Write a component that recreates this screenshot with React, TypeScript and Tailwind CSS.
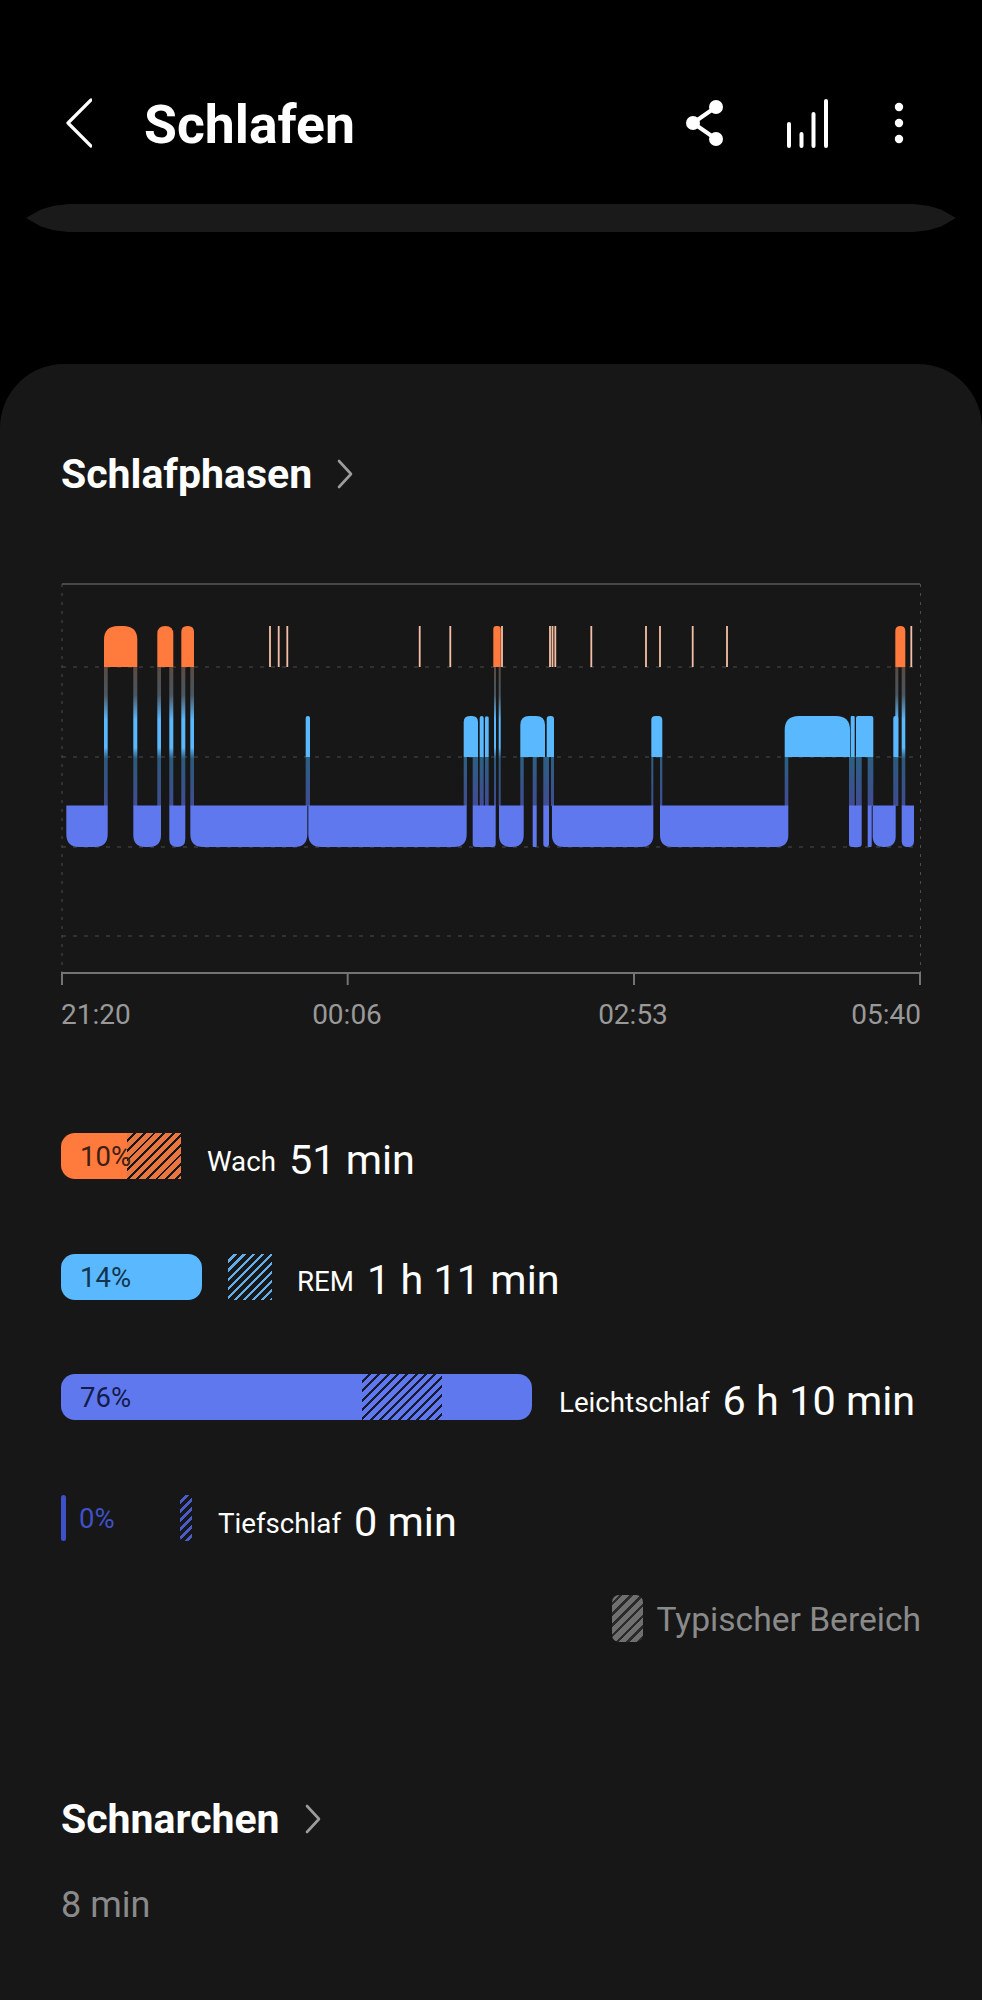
const ORANGE = '#ff7a3c'
const BLUE = '#5ab8ff'
const LIGHT = '#6078ee'

// [von x, bis x, Radius]
const wachBlocks = [
  [104, 137.3, 14],
  [157.3, 173.3, 8],
  [181.3, 194, 6],
  [493.3, 500.7, 3],
  [895.3, 905.3, 5],
]
const wachTicks = [270, 278.7, 287.3, 419.7, 450.3, 502, 550, 552.5, 555.3, 591.3, 646, 660, 692.7, 727, 911.3]
const remBlocks = [
  [305.7, 310, 2],
  [463.7, 478, 6],
  [479.7, 483.7, 2],
  [485, 488.7, 2],
  [520.3, 545, 9],
  [546.7, 554, 3],
  [651.3, 662.3, 4],
  [784.7, 850, 14],
  [850.7, 854.7, 1],
  [856, 873.3, 2],
  [893.3, 898.3, 2],
]
const leichtBlocks = [
  [66.3, 107.7, 13],
  [133.3, 161, 12],
  [169.3, 185.3, 8],
  [190.3, 307.3, 13],
  [308.3, 466.7, 13],
  [472.7, 495.7, 3],
  [499, 523.7, 12],
  [532.7, 536.7, 1],
  [543.3, 549, 3],
  [552, 653.3, 12],
  [660, 788.3, 12],
  [849, 861.7, 3],
  [867.7, 871.7, 1],
  [872.7, 895.7, 11],
  [901.7, 914, 6],
]
const wachStrips = [
  [104, 107.7],
  [133.3, 137.3],
  [157.3, 161],
  [169.3, 173.3],
  [181.3, 185.3],
  [190.3, 194],
  [494, 496],
  [498.7, 500.7],
  [895.3, 898.3],
  [901.7, 905.3],
]
const remStrips = [
  [305.7, 310],
  [463.7, 467],
  [472.7, 478],
  [479.7, 483.7],
  [485, 488.7],
  [520.3, 523.7],
  [532.7, 536.7],
  [543.3, 549],
  [551, 554],
  [651.3, 653.3],
  [660, 662.3],
  [784.7, 788.3],
  [849, 854.7],
  [856, 861.7],
  [867.7, 873.3],
  [893.3, 895.7],
]

function topRounded(x1: number, x2: number, r: number, top: number, bottom: number) {
  return `M${x1} ${bottom}V${top + r}Q${x1} ${top} ${x1 + r} ${top}H${x2 - r}Q${x2} ${top} ${x2} ${top + r}V${bottom}Z`
}

function bottomRounded(x1: number, x2: number, r: number, top: number, bottom: number) {
  return `M${x1} ${top}V${bottom - r}Q${x1} ${bottom} ${x1 + r} ${bottom}H${x2 - r}Q${x2} ${bottom} ${x2} ${bottom - r}V${top}Z`
}

function SleepChart() {
  return (
    <svg className="block w-[860px] h-[410px]" viewBox="61 580 860 410">
      <defs>
        <linearGradient id="wachStrip" gradientUnits="userSpaceOnUse" x1="0" y1="667" x2="0" y2="806">
          <stop offset="0" stopColor="#5a4a44" />
          <stop offset="0.2" stopColor="#4a5660" />
          <stop offset="0.38" stopColor="#5ab8ff" />
          <stop offset="0.58" stopColor="#5ab8ff" />
          <stop offset="0.66" stopColor="#2c5a7a" />
          <stop offset="1" stopColor="#404c94" />
        </linearGradient>
        <linearGradient id="remStrip" gradientUnits="userSpaceOnUse" x1="0" y1="757" x2="0" y2="806">
          <stop offset="0" stopColor="#2c5f82" />
          <stop offset="1" stopColor="#404c94" />
        </linearGradient>
      </defs>

      {/* Raster */}
      <path d="M62 584H920" stroke="#484848" strokeWidth="2" />
      <path d="M62 584V973M920.5 584V973" stroke="#4c4c4c" strokeWidth="1" strokeDasharray="3 6" />
      <path d="M62 667H920M62 757H920M62 847H920M62 936H920" stroke="#4c4c4c" strokeWidth="1" strokeDasharray="4 7" />
      <path d="M61 973H921" stroke="#747474" strokeWidth="2" />
      <path d="M62 973V985M347.7 973V985M634 973V985M920 973V985" stroke="#747474" strokeWidth="2" />

      {/* Übergänge */}
      {wachStrips.map(([a, b]) => (
        <rect key={a} x={a} y={667} width={b - a} height={139} fill="url(#wachStrip)" />
      ))}
      {remStrips.map(([a, b]) => (
        <rect key={a} x={a} y={757} width={b - a} height={49} fill="url(#remStrip)" />
      ))}

      {/* Phasen */}
      {wachTicks.map(x => (
        <rect key={x} x={x - 0.9} y={626} width={1.8} height={41} fill="#f4bfa4" />
      ))}
      {wachBlocks.map(([a, b, r]) => (
        <path key={a} d={topRounded(a, b, r, 626, 667)} fill={ORANGE} />
      ))}
      {remBlocks.map(([a, b, r]) => (
        <path key={a} d={topRounded(a, b, r, 716, 757)} fill={BLUE} />
      ))}
      {leichtBlocks.map(([a, b, r]) => (
        <path key={a} d={bottomRounded(a, b, r, 805.5, 847)} fill={LIGHT} />
      ))}
    </svg>
  )
}

function Chevron({ className }: { className: string }) {
  return (
    <svg className={className} viewBox="0 0 16 30" fill="none" stroke="#9c9c9c" strokeWidth="2.6" strokeLinecap="round" strokeLinejoin="round">
      <path d="M2 2L14 15L2 28" />
    </svg>
  )
}

function Stage({ label, value }: { label: string; value: string }) {
  return (
    <div className="flex items-end mt-[7px] whitespace-nowrap text-white">
      <span className="text-[27.7px] leading-[43px]">{label}</span>
      <span className="ml-[13px] text-[41.4px] leading-[46px]">{value}</span>
    </div>
  )
}

export default function App() {
  return (
    <div className="flex flex-col w-[982px] h-[2000px] overflow-hidden bg-black font-[Roboto,sans-serif]">
      {/* Kopfzeile */}
      <header className="flex items-center h-[50px] mt-[98px] pl-[66px] text-white">
        <svg className="w-[26px] h-[50px]" viewBox="0 0 26 50" fill="none" stroke="#fff" strokeWidth="3.2" strokeLinecap="round" strokeLinejoin="round">
          <path d="M25 2L2 25L25 48" />
        </svg>
        <h1 className="ml-[52px] mt-[3px] text-[53.5px] leading-[50px] font-bold">Schlafen</h1>
        <svg className="ml-auto w-[44px] h-[50px]" viewBox="0 0 44 50" fill="#fff" stroke="#fff" strokeWidth="4">
          <path d="M33 9L10 25L33 41" fill="none" />
          <circle cx="33" cy="9" r="7" stroke="none" />
          <circle cx="10" cy="25" r="7" stroke="none" />
          <circle cx="33" cy="41" r="7" stroke="none" />
        </svg>
        <svg className="ml-[58px] w-[44px] h-[50px]" viewBox="0 0 44 50" fill="none" stroke="#fff" strokeWidth="4" strokeLinecap="round">
          <path d="M4 48V26M16.5 48V36M28.5 48V16M41 48V3" />
        </svg>
        <svg className="ml-[64px] mr-[77px] w-[12px] h-[50px]" viewBox="0 0 12 50" fill="#fff">
          <circle cx="6" cy="9" r="4.2" />
          <circle cx="6" cy="25" r="4.2" />
          <circle cx="6" cy="41" r="4.2" />
        </svg>
      </header>

      <div className="mt-[56px] mx-[26px] h-[28px] bg-[#1a1a1a] [clip-path:polygon(0_50%,1.6%_20%,3%_6%,4.6%_0,95.4%_0,97%_6%,98.4%_20%,100%_50%,98.4%_80%,97%_94%,95.4%_100%,4.6%_100%,3%_94%,1.6%_80%)]" />

      {/* Karte */}
      <main className="flex-1 mt-[132px] px-[61px] pt-[87px] rounded-t-[64px] bg-[#171717]">
        <div className="flex items-center h-[46px]">
          <h2 className="text-[41px] leading-[46px] font-bold text-white">Schlafphasen</h2>
          <Chevron className="ml-[25px] w-[16px] h-[30px]" />
        </div>

        <div className="mt-[83px]">
          <SleepChart />
        </div>
        <div className="grid grid-cols-[143px_286px_286px_145px] mt-[9px] text-[28px] leading-[32px] text-[#999999]">
          <span>21:20</span>
          <span className="text-center">00:06</span>
          <span className="text-center">02:53</span>
          <span className="text-right">05:40</span>
        </div>

        <div className="flex flex-col gap-[74.7px] mt-[102px]">
          {/* Wach */}
          <div className="flex items-center h-[46px]">
            <div className="flex items-center w-[66px] h-[46px] pl-[19px] pt-[1px] rounded-l-[14px] bg-[#ff7a3c]">
              <span className="relative z-10 text-[27.5px] text-[#3a2015] whitespace-nowrap">10%</span>
            </div>
            <div className="w-[54px] h-[46px] bg-[repeating-linear-gradient(135deg,#e9763f_0,#e9763f_4.8px,#171717_4.8px,#171717_6.8px)]" />
            <div className="ml-[26px]">
              <Stage label="Wach" value="51 min" />
            </div>
          </div>

          {/* REM */}
          <div className="flex items-center h-[46px]">
            <div className="flex items-center w-[141px] h-[46px] pl-[19px] pt-[1px] rounded-[14px] bg-[#5ab8ff]">
              <span className="text-[27.5px] text-[#12344e]">14%</span>
            </div>
            <div className="ml-[26px] w-[44px] h-[46px] bg-[repeating-linear-gradient(135deg,#171717_0,#171717_4.2px,#63aee8_4.2px,#63aee8_6.4px)]" />
            <div className="ml-[25px]">
              <Stage label="REM" value="1 h 11 min" />
            </div>
          </div>

          {/* Leichtschlaf */}
          <div className="flex items-center h-[46px]">
            <div className="flex items-center w-[301px] h-[46px] pl-[19px] pt-[1px] rounded-l-[14px] bg-[#6078ee]">
              <span className="text-[27.5px] text-[#141c4a]">76%</span>
            </div>
            <div className="w-[80px] h-[46px] bg-[repeating-linear-gradient(135deg,#6078ee_0,#6078ee_4.6px,#171a30_4.6px,#171a30_6.6px)]" />
            <div className="w-[90px] h-[46px] rounded-r-[14px] bg-[#6078ee]" />
            <div className="ml-[27px]">
              <Stage label="Leichtschlaf" value="6 h 10 min" />
            </div>
          </div>

          {/* Tiefschlaf */}
          <div className="flex items-center h-[46px]">
            <div className="w-[5px] h-[46px] rounded-full bg-[#3f51c8]" />
            <span className="ml-[13px] pt-[1px] w-[101px] text-[27.5px] text-[#3f51c8]">0%</span>
            <div className="w-[12px] h-[46px] rounded-[4px] bg-[repeating-linear-gradient(135deg,#171717_0,#171717_3.6px,#4a5cc8_3.6px,#4a5cc8_6.4px)]" />
            <div className="ml-[26px]">
              <Stage label="Tiefschlaf" value="0 min" />
            </div>
          </div>
        </div>

        <div className="flex items-center justify-end mt-[54px] h-[47px]">
          <div className="w-[31px] h-[47px] rounded-[7px] bg-[repeating-linear-gradient(135deg,#6f6f6f_0,#6f6f6f_5px,#2a2a2a_5px,#2a2a2a_7.6px)]" />
          <span className="ml-[13px] pt-[4px] text-[33.6px] text-[#8a8a8a]">Typischer Bereich</span>
        </div>

        <div className="flex items-center h-[46px] mt-[154px]">
          <h2 className="text-[41px] leading-[46px] font-bold text-white">Schnarchen</h2>
          <Chevron className="ml-[25px] w-[16px] h-[30px]" />
        </div>
        <p className="mt-[41px] text-[36px] leading-[44px] text-[#8a8a8a]">8 min</p>
      </main>
    </div>
  )
}
